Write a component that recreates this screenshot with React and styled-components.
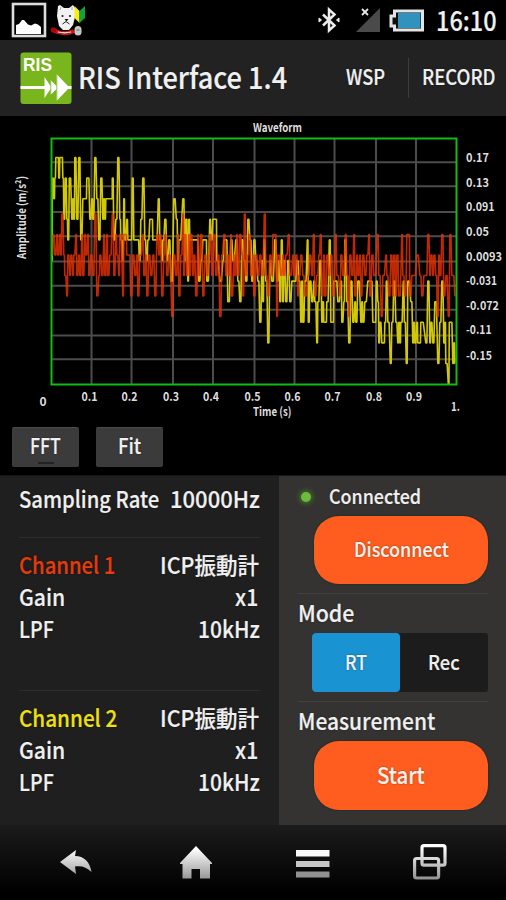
import React, {useLayoutEffect, useRef, useState} from 'react'
import styled, {createGlobalStyle} from "styled-components";

const GlobalStyle = createGlobalStyle`
    * {
        box-sizing: border-box;
    }
    body {
        margin: 0;
        background: #000000;
        font-family: "Noto Sans CJK JP", "Noto Sans", sans-serif;
        font-weight: 500;
        color: #f0f0f0;
    }
    button {
        font: inherit;
        color: inherit;
        border: none;
        padding: 0;
    }
    svg {
        display: block;
    }
`
const Screen = styled.div`
    width: 506px;
    height: 900px;
    display: flex;
    flex-direction: column;
    background: #000000;
    overflow: hidden;
`
const StatusBar = styled.header`
    height: 40px;
    display: flex;
    align-items: center;
    justify-content: space-between;
    padding: 0 9px 0 11px;
`
const StatusGroup = styled.div`
    height: 40px;
    display: flex;
    align-items: center;
`
const Gap = styled.span`
    width: ${props => props.$size}px;
`
const Clock = styled.time`
    font-size: 27px;
    line-height: 36px;
`
const ActionBar = styled.nav`
    height: 76px;
    display: flex;
    align-items: center;
    padding-left: 19px;
    background: #222222;
`
const Title = styled.h1`
    flex: 1;
    margin: 0 0 0 5px;
    padding-bottom: 4px;
    font-size: 30px;
    font-weight: 500;
    line-height: 68px;
`
const BarAction = styled.button`
    width: ${props => props.$width}px;
    height: 40px;
    background: none;
    border-left: 1px solid ${props => props.$divided ? '#3d3d3d' : 'transparent'};
    font-size: 21px;
    line-height: 37px;
    display: flex;
    justify-content: center;
    padding-left: 2px;
`
const Plot = styled.section`
    height: 359px;
    background: #000000;
`
const PlotButtons = styled.div`
    display: flex;
    gap: 17px;
    padding: 1px 12px;
`
const PlotButton = styled.button`
    width: 67px;
    height: 40px;
    display: flex;
    flex-direction: column;
    align-items: center;
    background: #3b3b3b;
    border-top: 1px solid #4b4b4b;
    border-radius: 2px;
    font-size: 21px;
    line-height: 35px;
    &::after {
        content: "";
        width: 16px;
        height: 2px;
        margin-top: -1px;
        background: ${props => props.$active ? '#222222' : 'transparent'};
    }
`
const Panels = styled.main`
    height: 350px;
    display: flex;
    border-top: 1px solid #151515;
`
const Info = styled.section`
    width: 279px;
    padding: 0 19px;
    background: #1f1f1f;
`
const InfoBlock = styled.div`
    height: ${props => props.$height}px;
    padding-top: ${props => props.$top}px;
    border-bottom: 1px solid ${props => props.$last ? 'transparent' : '#2d2d2d'};
`
const InfoRow = styled.div`
    height: 32px;
    display: flex;
    justify-content: space-between;
    font-size: 23px;
    line-height: 31px;
`
const ChannelName = styled.span`
    color: ${props => props.$color};
`
const Controls = styled.section`
    flex: 1;
    padding: 0 18px 0 19px;
    background: #353331;
`
const Connection = styled.div`
    height: 40px;
    display: flex;
    align-items: center;
    padding-left: 3px;
    font-size: 20px;
    line-height: 38px;
`
const Led = styled.span`
    width: 10px;
    height: 10px;
    margin: 2px 18px 0 0;
    border-radius: 50%;
    background: #6cbb3c;
    box-shadow: 0 0 4px 2px #3d6a28;
`
const RoundButton = styled.button`
    width: 174px;
    height: ${props => props.$height}px;
    margin-left: 16px;
    display: flex;
    justify-content: center;
    border-radius: 25px;
    background: #ff5d1f;
    box-shadow: 0 0 1px 1px #25302b;
    color: #fff1ea;
    font-size: ${props => props.$size}px;
    line-height: ${props => props.$height - 3}px;
`
const ControlTitle = styled.h2`
    height: 40px;
    margin: 9px 0 0;
    border-top: 1px solid #42403e;
    font-size: 22.5px;
    font-weight: 500;
    line-height: 36px;
`
const Toggle = styled.div`
    width: 176px;
    height: 59px;
    margin-left: 14px;
    display: flex;
    background: #1c1c1c;
    border-radius: 3px;
`
const ToggleItem = styled.button`
    flex: 1;
    height: 59px;
    display: flex;
    justify-content: center;
    border-radius: 4px;
    background: ${props => props.$active ? '#1993d2' : 'transparent'};
    font-size: 20px;
    line-height: 57px;
`
const NavBar = styled.footer`
    height: 75px;
    display: grid;
    grid-template-columns: 120px 120px 114px 120px;
    justify-items: center;
    align-items: center;
    padding-left: 16px;
    background: linear-gradient(#1b1b1b, #0c0c0c 50%, #000000 90%);
`
const Fitted = styled.span`
    display: inline-block;
    flex: none;
    white-space: nowrap;
    transform-origin: 0 50%;
    -webkit-text-stroke: 0.2px currentColor;
`
const FitBox = styled.span`
    display: inline-block;
    flex: none;
    width: ${props => props.$width}px;
    margin-right: ${props => props.$end || 0}px;
    vertical-align: top;
    text-shadow: 0 0 2px #00000080;
`

// condenses a label so that it takes exactly the given width
const Fit = ({width, end, children}) => {
    const ref = useRef(null)
    const [scale, setScale] = useState(1)

    useLayoutEffect(() => {
        setScale(width / ref.current.offsetWidth)
    }, [width, children])

    return (
        <FitBox $width={width} $end={end}>
            <Fitted ref={ref} style={{transform: `scaleX(${scale})`}}>{children}</Fitted>
        </FitBox>
    )
}

// "x:level" pairs, level 0 is the highest sample
const YELLOW = '52:5 52.5:1 54:2 55:1 56:0 58:0 59:1 60:0 62:0 63:1 64:3 65.5:1 67:3 68:4 69.5:1 72:3 73:2 74:3 75:0 77:3 79:0 81:4 83:2 86:2 87:1 88:1 90:3 92:2 93:3 95:0 97:2 99:4 101:1 103:3 104:2 105:3 106:2 112:2 112.5:1 114:4 116:3 118:0 120:3 121:4 122.5:5 124:2 125:4 127:3 128:4 131:4 132.5:1 134:4 138:4 139.5:5 141:3 143:1 145:4 146.5:5 148:4 150:3 152:3 153:4 156:4 158.5:2 160:4 162:5 163:4 165:3 167:5 169:4 171:6 174:2 176.5:3 178:5 179:4 183:2 185:5 186:3 188:6 189:3 190:4 197:4 199:6 201:5 203:4 206:4 207:6 210:3 211:4 213:3 216:3 217:5 220:6 223:5 224:4 226:4 228:7 231:4 233:5 236:4 238:6 240:7 242:4 244:5 246:6 248:3 250:4 252:6 254:4 256:5 258:6 260:8 262:5 263:7 264:4 266:6 268:9 270:5 272:6 275:4 277:6 279:5 280:7 281.5:4 283:7 284:5 286:7 288:5 290:7 292:6 295:6 297:5 299:6 301:8 302:6 303:8 305:6 307.5:4 308.5:8 310:6 312:7 314:6 315:7 317:9 318:7 320:5 322:8 323:7 324:8 326:8 327:7 329.5:4 331:8 333:8 334:6 336:6 338:7 341:6 342:8 344:7 345:4 347:7 349:9 351:6 353:8 355:7 356:8 358:6 361:8 362:7 363:8 365:7 368:6 371:6 373:8 375:8 376.5:6 378:7 379:9 380:8 382:9 384:9 385:8 386.5:6 388:8 390.5:10 392:8 394:6 396:8 398:9 399:8 400:9 401:8 403.5:6 404.5:8 406.5:10 408:6 411:7 413:9 414:8 415:9 417:8 418:9 420:9 421:8 426:9 428:6 430:9 431:8 433:9 435:7 438:10 440:8 442:6 444:9 445:8 446:10 448.5:11 449.5:8 451:8 453:10 454:9 455:10'
const RED = '52:2 53:1 55:2 57:1 58:2 60:1 61:2 62:0 64:2 65:3 67:4 68:2 70:3 71:2 73:3 74:2 76:1 77:3 79:2 80:3 82:1 83:3 85:1 86:2 88:1 89:3 91:2 93:3 95:0 97:4 99:3 100:2 102:3 104:1 105:3 107:1 108:3 110:2 112.5:0 114:3 116:1 117:2 119:3 120:1 123:4 124:1 126:1 127:2 129:2 131:4 133:2 135:3 137:2 138:4 140:2 143:1 144:3 146:2 147:4 149:2 151:3 153:2 155:4 157:1 159:2 160:1 162:4 164:2 165:1 167:3 169:2 172:5 174:2 176:3 178:1 179:4 181:2 183:0 184:3 185:1 187:3 189:1 190:3 191:1 193:3 194:2 196:4 198:1 199:3 201:1 203:4 205:2 207:3 209:2 210:1 212:3 214:1 216:3 218:2 220:5 222:2 224:1 226:3 228:2 229:3 231:1 231.5:4 234:2 235:3 237:1 238:3 240:1 242:2 243:4 244.5:0 246:3 248:2 249:1 251:3 253:2 254:4 256:2 258:3 260:2 262:3 264.5:0 266:3 268:4 270:2 272:3 273:1 275:1 277:5 278:2 281:3 283:2 284:3 286:2 288.5:1 290:3 293:2 294:3 296:2 298:4 299:3 301:2 303:3 305:4 308:3 310:2 312:3 313.5:1 315:4 317:3 319:2 320.5:1 322:4 324:2 325:4 327:2 329:3 331:2 333:4 335.5:1 337:3 340:4 341:2 343:3 345.5:1 347:3 349:5 350:2 352:3 354:1 355:4 357:2 358:3 360:2 361:4 363:2 365:3 367:2 369:1 370:4 372:2 374:3 377.5:1 379:3 381.5:5 383:3 386:2 387:3 389:4 391:2 393:4 394:2 396:4 397:2 399:4 402:1 403:3 405:4 407:1 409:1 410:4 412:3 414:3 417:2 420:3 422:4 424:3 426:3 428:1 430:3 431:2 433:3 434:2 436:3 437.5:5 439:2 440:3 442:1 444:4 446:3 448.5:5 450:1 452:3 453:3 455:4'

// every sample is held for a moment, then the line runs steeply to the next one
const trace = (points, top, step) => {
    const samples = points.split(' ').map(point => point.split(':').map(Number))
    return samples.map(([x, level], i) => {
        const y = top + level * step
        const next = samples[i + 1]
        const hold = next ? (next[0] - x) * 0.45 : 0
        return `${x - 0.2},${y} ${x + hold},${y}`
    }).join(' ')
}

const COLUMNS = [91.5, 131.5, 173, 213, 254.5, 294.5, 334.5, 376, 416]
const LINES = [46.3, 70.3, 96, 120.3, 145.5, 169.7, 193.7, 219.5, 243.3]
const SCALE = [
    ['0.17', 42, 23],
    ['0.13', 67, 23],
    ['0.091', 91, 28.5],
    ['0.05', 116, 23],
    ['0.0093', 141, 36],
    ['-0.031', 165, 31],
    ['-0.072', 190, 33],
    ['-0.11', 214, 25.5],
    ['-0.15', 240, 26],
]

const ChartText = styled.text`
    fill: #dedede;
    font-size: 12px;
    font-weight: 700;
`

const Chart = () => (
    <svg width="506" height="310" viewBox="0 0 506 310">
        {COLUMNS.map(x => <line key={x} x1={x} x2={x} y1="23" y2="268" stroke="#4c4c4c" strokeWidth="2"/>)}
        {LINES.map(y => <line key={y} x1="52" x2="456" y1={y} y2={y} stroke="#4c4c4c" strokeWidth="2"/>)}
        <g fill="none" strokeWidth="1.600" strokeLinejoin="bevel">
            <polyline points={trace(YELLOW, 41.5, 20.6)} stroke="#d2c808"/>
            <polyline points={trace(RED, 98, 20.5)} stroke="#e83204" strokeOpacity="0.82"/>
        </g>
        <rect x="51.5" y="22.5" width="405" height="246" fill="none" stroke="#12bd12" strokeWidth="2"/>
        <ChartText x="253" y="16" textLength="49" lengthAdjust="spacingAndGlyphs">Waveform</ChartText>
        <ChartText x="253" y="300" textLength="38.5" lengthAdjust="spacingAndGlyphs">Time (s)</ChartText>
        <ChartText transform="translate(26 143) rotate(-90)" textLength="83" lengthAdjust="spacingAndGlyphs">Amplitude (m/s²)</ChartText>
        <ChartText x="43" y="289.5" textAnchor="middle">0</ChartText>
        {COLUMNS.map((x, i) => (
            <ChartText key={x} x={x - 10} y="284.5" textLength="16" lengthAdjust="spacingAndGlyphs">{`0.${i + 1}`}</ChartText>
        ))}
        <ChartText x="451" y="294.5" textLength="9" lengthAdjust="spacingAndGlyphs">1.</ChartText>
        {SCALE.map(([label, y, width]) => (
            <ChartText key={label} x="466" y={y + 4} textLength={width} lengthAdjust="spacingAndGlyphs">{label}</ChartText>
        ))}
    </svg>
)

const PictureIcon = () => (
    <svg width="36" height="36" viewBox="0 0 36 36">
        <rect x="2" y="2" width="32" height="32" fill="#000" stroke="#dcdcdc" strokeWidth="2.6"/>
        <path d="M5 32V23l3-1 3-4h2l4 4.500 3 1 4-2 3 1 3 2.500v7z" fill="#fff"/>
    </svg>
)

const DogIcon = () => (
    <svg width="38" height="36" viewBox="0 0 38 36">
        <path d="M7 14L8 4l2-1 4 3h5l4-3 2 3v9l-2 8-4 5h-6l-4-4z" fill="#f2f2f2"/>
        <path d="M10 8l1-3M22 8l0-3" stroke="#aaa" strokeWidth="1"/>
        <circle cx="12.5" cy="14" r="1.1" fill="#222"/>
        <circle cx="20" cy="14" r="1.1" fill="#222"/>
        <path d="M14.500 17h4l-2 2.500z" fill="#111"/>
        <path d="M12.500 22l3.500-2.500 3.500 2.500" fill="none" stroke="#222" strokeWidth="1"/>
        <path d="M3 28c7 4 15 4 21 1" stroke="#d01414" strokeWidth="4" fill="none"/>
        <circle cx="3.500" cy="28" r="2.800" fill="#a80808"/>
        <path d="M8 30c4 1 9 1 13 0" stroke="#e6e6e6" strokeWidth="1.2" fill="none"/>
        <rect x="24.500" y="24" width="7" height="9.500" rx="3.500" fill="#c8c8c8"/>
        <path d="M26.500 28h3" stroke="#666" strokeWidth="1"/>
        <path d="M24.500 4l5 5v12L24.500 16z" fill="#f6f018"/>
        <path d="M35 4l-5.500 5v12L35 16z" fill="#12a33c"/>
    </svg>
)

const BluetoothIcon = () => (
    <svg width="22" height="28" viewBox="0 0 22 28">
        <path d="M5 8.500l11.500 11-5.500 5V3.500l5.500 5L5 19.500" fill="none" stroke="#ededed" strokeWidth="2.500"/>
        <path d="M1 12l2.500 2-2.500 2zM21 12L18.500 14l2.500 2z" fill="#ededed" stroke="#ededed"/>
    </svg>
)

const SignalIcon = () => (
    <svg width="26" height="28" viewBox="0 0 26 28">
        <path d="M1 26L25 2v24z" fill="#4a4a4a"/>
        <path d="M7 3l6 6M13 3L7 9" stroke="#e6e6e6" strokeWidth="1.8"/>
    </svg>
)

const BatteryIcon = () => (
    <svg width="36" height="24" viewBox="0 0 36 24">
        <path d="M5.500 3H33.500V22H5.500V18H2V8H5.500z" fill="#101010" stroke="#e4e4e4" strokeWidth="3"/>
        <rect x="9" y="5" width="22.500" height="15" fill="#3193bd"/>
    </svg>
)

const LogoText = styled.text`
    fill: #ffffff;
    font-family: "Liberation Sans", sans-serif;
    font-size: 18px;
    font-weight: 700;
`

const Logo = () => (
    <svg width="54" height="54" viewBox="0 0 54 54">
        <rect x="1.500" y="1.500" width="51" height="51.500" rx="3" fill="#79b51c"/>
        <LogoText x="4" y="20" textLength="29" lengthAdjust="spacingAndGlyphs">RIS</LogoText>
        <path d="M1.500 35h24v-9l6 9v-6l6 6V23l11.500 12h3.500v3H49l-11.500 12V38l-6 6v-6l-6 9v-9h-24z" fill="#fff"/>
        <path d="M31.800 27v18M37.800 22v28" stroke="#79b51c" strokeWidth="0.800"/>
    </svg>
)

const Shade = ({id}) => (
    <linearGradient id={id} x1="0" y1="0" x2="0" y2="36" gradientUnits="userSpaceOnUse">
        <stop offset="0.1" stopColor="#ffffff"/>
        <stop offset="1" stopColor="#8f8f8f"/>
    </linearGradient>
)

const BackIcon = () => (
    <svg width="34" height="36" viewBox="0 0 34 36">
        <Shade id="back"/>
        <path d="M1 17L17 5l-1 6c9 0 15 6 16.500 16-5-5-10-6.500-16.500-5.500l1 7.500z" fill="url(#back)"/>
    </svg>
)

const HomeIcon = () => (
    <svg width="34" height="36" viewBox="0 0 34 36">
        <Shade id="home"/>
        <path d="M17 1L33 18v1h-2V33.500H21V24h-8.500v9.500h-9V19H1v-1z" fill="url(#home)"/>
    </svg>
)

const MenuIcon = () => (
    <svg width="34" height="36" viewBox="0 0 34 36">
        <path d="M0 5h33.500v6.500H0z" fill="#f8f8f8"/>
        <path d="M0 16h33.500v6H0z" fill="#c6c6c6"/>
        <path d="M0 26.500h33.500v6H0z" fill="#919191"/>
    </svg>
)

const RecentIcon = () => (
    <svg width="34" height="38" viewBox="0 0 34 38">
        <Shade id="recent"/>
        <g fill="none" stroke="url(#recent)" strokeWidth="3.200">
            <rect x="9" y="1.700" width="23" height="19.500" rx="2"/>
            <rect x="1.600" y="14.500" width="24" height="19.500" rx="2"/>
        </g>
    </svg>
)

const Channel = (props) => {

    const {name, color, width, last} = props

    return (
        <InfoBlock $height={153} $top={11} $last={last}>
            <InfoRow>
                <ChannelName $color={color}><Fit width={width}>{name}</Fit></ChannelName>
                <Fit width={99} end={1}>ICP振動計</Fit>
            </InfoRow>
            <InfoRow>
                <Fit width={46}>Gain</Fit>
                <Fit width={23} end={2}>x1</Fit>
            </InfoRow>
            <InfoRow>
                <Fit width={35}>LPF</Fit>
                <Fit width={62}>10kHz</Fit>
            </InfoRow>
        </InfoBlock>
    )
}

const App = () => {

    const [mode, setMode] = useState('RT')

    return (
        <Screen>
            <GlobalStyle/>
            <StatusBar>
                <StatusGroup>
                    <PictureIcon/>
                    <Gap $size={3}/>
                    <DogIcon/>
                </StatusGroup>
                <StatusGroup>
                    <BluetoothIcon/>
                    <Gap $size={15}/>
                    <SignalIcon/>
                    <Gap $size={8}/>
                    <BatteryIcon/>
                    <Gap $size={11}/>
                    <Clock><Fit width={61}>16:10</Fit></Clock>
                </StatusGroup>
            </StatusBar>
            <ActionBar>
                <Logo/>
                <Title><Fit width={209}>RIS Interface 1.4</Fit></Title>
                <BarAction $width={89}><Fit width={39}>WSP</Fit></BarAction>
                <BarAction $width={98} $divided><Fit width={74}>RECORD</Fit></BarAction>
            </ActionBar>
            <Plot>
                <Chart/>
                <PlotButtons>
                    <PlotButton $active><Fit width={31}>FFT</Fit></PlotButton>
                    <PlotButton><Fit width={23}>Fit</Fit></PlotButton>
                </PlotButtons>
            </Plot>
            <Panels>
                <Info>
                    <InfoBlock $height={62} $top={7}>
                        <InfoRow>
                            <Fit width={140}>Sampling Rate</Fit>
                            <Fit width={90}>10000Hz</Fit>
                        </InfoRow>
                    </InfoBlock>
                    <Channel name="Channel 1" color="#e63c0c" width={96}/>
                    <Channel name="Channel 2" color="#f0e010" width={98} last/>
                </Info>
                <Controls>
                    <Connection>
                        <Led/>
                        <Fit width={92}>Connected</Fit>
                    </Connection>
                    <RoundButton $height={68} $size={20}><Fit width={95}>Disconnect</Fit></RoundButton>
                    <ControlTitle><Fit width={56}>Mode</Fit></ControlTitle>
                    <Toggle>
                        <ToggleItem $active={mode === 'RT'} onClick={() => setMode('RT')}><Fit width={22}>RT</Fit></ToggleItem>
                        <ToggleItem $active={mode === 'Rec'} onClick={() => setMode('Rec')}><Fit width={32}>Rec</Fit></ToggleItem>
                    </Toggle>
                    <ControlTitle><Fit width={137}>Measurement</Fit></ControlTitle>
                    <RoundButton $height={69} $size={23}><Fit width={48}>Start</Fit></RoundButton>
                </Controls>
            </Panels>
            <NavBar>
                <BackIcon/>
                <HomeIcon/>
                <MenuIcon/>
                <RecentIcon/>
            </NavBar>
        </Screen>
    )
}

export default App
